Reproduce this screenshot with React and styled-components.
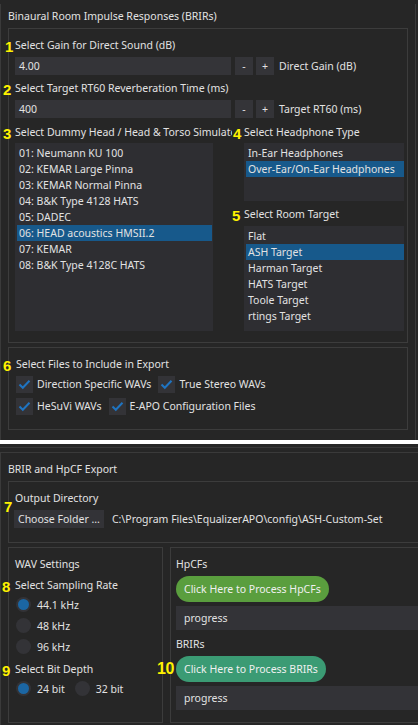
import React from 'react';
import styled, { createGlobalStyle } from 'styled-components';

const GlobalStyle = createGlobalStyle`
  html, body {
    margin: 0;
    padding: 0;
    background: #ffffff;
  }
  body {
    font-family: "Noto Sans", "Open Sans", sans-serif;
    font-size: 10.5px;
    color: #e2e2e2;
  }
`;

const Page = styled.div`
  width: 418px;
  height: 725px;
  overflow: hidden;
  display: flex;
  flex-direction: column;
  gap: 4px;
  background: #ffffff;
`;

const Shot = styled.section`
  background: #262626;
  height: ${(p) => p.$h}px;
  overflow: hidden;
  flex: ${(p) => (p.$h ? 'none' : '1')};
`;

const OuterFrame = styled.div`
  width: ${(p) => p.$w}px;
  border: 1px solid #3a3a3a;
  border-top: ${(p) => (p.$top ? '1px solid #3a3a3a' : 'none')};
  box-sizing: border-box;
  height: ${(p) => p.$h}px;
`;

const Strip = styled.div`
  margin-top: 3px;
  height: 4px;
  border-top: 1px solid #383838;
`;

const GroupTitle = styled.div`
  margin-top: 4px;
  height: 24px;
  padding-left: 7px;
  display: flex;
  align-items: center;
  white-space: nowrap;
`;

const Frame = styled.div`
  border: 1px solid #3c3c3c;
  margin: ${(p) => p.$m || '0 7px'};
  padding: ${(p) => p.$p || '7px 3px 11px 6px'};
  width: ${(p) => (p.$w ? `${p.$w}px` : 'auto')};
  box-sizing: border-box;
  flex: ${(p) => (p.$grow ? '1' : 'none')};
  position: relative;
`;

const Label = styled.div`
  position: relative;
  height: 18px;
  margin-top: ${(p) => p.$mt || 0}px;
  display: flex;
  align-items: center;
  white-space: nowrap;
`;

const ClippedText = styled.span`
  overflow: hidden;
  width: ${(p) => p.$w}px;
`;

const Marker = styled.span`
  position: absolute;
  left: ${(p) => p.$x}px;
  top: ${(p) => p.$y}px;
  color: #fff200;
  font-family: "Liberation Sans", Arial, sans-serif;
  font-weight: bold;
  font-size: ${(p) => p.$size || 15}px;
  line-height: 1;
  letter-spacing: -0.5px;
`;

const SpinRow = styled.div`
  display: flex;
  align-items: center;
  height: 18px;
  margin-top: 3px;
`;

const SpinInput = styled.div`
  width: 216px;
  height: 18px;
  background: #343438;
  padding-left: 4px;
  box-sizing: border-box;
  display: flex;
  align-items: center;
`;

const StepButton = styled.div`
  width: 18px;
  height: 18px;
  margin-left: ${(p) => p.$ml}px;
  background: #343438;
  display: flex;
  align-items: center;
  justify-content: center;
`;

const SpinCaption = styled.span`
  margin-left: 5px;
`;

const Columns = styled.div`
  display: grid;
  grid-template-columns: 217px 1fr;
  margin-top: 5px;
`;

const Column = styled.div`
  padding-left: ${(p) => p.$pl || 0}px;
  position: relative;
`;

const ListBox = styled.div`
  width: ${(p) => (p.$w ? `${p.$w}px` : 'auto')};
  height: ${(p) => p.$h}px;
  margin-top: ${(p) => p.$mt || 2}px;
  background: #2e2e32;
  padding: 2px ${(p) => p.$pr}px 2px 2px;
  box-sizing: border-box;
`;

const ListItem = styled.div`
  height: 16px;
  padding-left: 2px;
  display: flex;
  align-items: center;
  white-space: nowrap;
  background: ${(p) => (p.$selected ? '#17598b' : 'transparent')};
`;

const CheckRow = styled.div`
  display: flex;
  align-items: center;
  height: 22px;
  gap: 7px;
`;

const CheckItem = styled.div`
  display: flex;
  align-items: center;
  gap: 4px;
  white-space: nowrap;
`;

const CheckBox = styled.span`
  width: 17px;
  height: 17px;
  background: #333337;
  display: flex;
  align-items: center;
  justify-content: center;
`;

const PanelRow = styled.div`
  display: flex;
  gap: 7px;
  margin: 4px 0 0 7px;
`;

const FolderRow = styled.div`
  display: flex;
  align-items: center;
  height: 18px;
  margin-top: 3px;
  gap: 8px;
  white-space: nowrap;
`;

const FolderButton = styled.div`
  height: 18px;
  margin-left: -1px;
  padding: 0 4px;
  background: #333337;
  display: flex;
  align-items: center;
`;

const RadioRow = styled.div`
  display: flex;
  align-items: center;
  height: 21px;
  gap: 9px;
`;

const RadioItem = styled.div`
  display: flex;
  align-items: center;
  gap: 6px;
  white-space: nowrap;
`;

const RadioDot = styled.span`
  width: 15px;
  height: 15px;
  border-radius: 50%;
  background: #333337;
  margin-left: 1px;
  display: flex;
  align-items: center;
  justify-content: center;
  &::after {
    content: '';
    width: 11px;
    height: 11px;
    border-radius: 50%;
    background: ${(p) => (p.$on ? '#1b66a3' : 'transparent')};
  }
`;

const ProcessButton = styled.div`
  position: relative;
  align-self: flex-start;
  height: 26px;
  margin-top: 3px;
  padding: 0 8px;
  border-radius: 13px;
  background: ${(p) => p.$color};
  display: flex;
  align-items: center;
  white-space: nowrap;
  color: #f0f0f0;
`;

const Progress = styled.div`
  height: 24px;
  margin-top: 4px;
  background: #333337;
  padding-left: 8px;
  display: flex;
  align-items: center;
`;

const Stack = styled.div`
  display: flex;
  flex-direction: column;
`;

const Check = () => (
  <CheckBox>
    <svg width="13" height="11" viewBox="0 0 13 11">
      <path d="M1.5 5.5 L4.8 8.8 L11.5 1.8" fill="none" stroke="#1f74c1" strokeWidth="2" />
    </svg>
  </CheckBox>
);

const dummyHeads = [
  '01: Neumann KU 100',
  '02: KEMAR Large Pinna',
  '03: KEMAR Normal Pinna',
  '04: B&K Type 4128 HATS',
  '05: DADEC',
  '06: HEAD acoustics HMSII.2',
  '07: KEMAR',
  '08: B&K Type 4128C HATS',
];

const headphones = ['In-Ear Headphones', 'Over-Ear/On-Ear Headphones'];

const roomTargets = ['Flat', 'ASH Target', 'Harman Target', 'HATS Target', 'Toole Target', 'rtings Target'];

const App = () => {
  return (
    <>
      <GlobalStyle />
      <Page>
        <Shot $h={440}>
          <OuterFrame $w={416} $h={437}>
            <GroupTitle>Binaural Room Impulse Responses (BRIRs)</GroupTitle>
            <Frame>
              <Label>
                <Marker $x={-10} $y={3}>1</Marker>
                Select Gain for Direct Sound (dB)
              </Label>
              <SpinRow>
                <SpinInput>4.00</SpinInput>
                <StepButton $ml={4}>-</StepButton>
                <StepButton $ml={3}>+</StepButton>
                <SpinCaption>Direct Gain (dB)</SpinCaption>
              </SpinRow>
              <Label $mt={4}>
                <Marker $x={-12} $y={3}>2</Marker>
                Select Target RT60 Reverberation Time (ms)
              </Label>
              <SpinRow>
                <SpinInput>400</SpinInput>
                <StepButton $ml={4}>-</StepButton>
                <StepButton $ml={3}>+</StepButton>
                <SpinCaption>Target RT60 (ms)</SpinCaption>
              </SpinRow>
              <Columns>
                <Column>
                  <Label>
                    <Marker $x={-12} $y={3}>3</Marker>
                    <ClippedText $w={220}>Select Dummy Head / Head &amp; Torso Simulator</ClippedText>
                  </Label>
                  <ListBox $w={198} $h={188} $pr={1}>
                    {dummyHeads.map((d, i) => (
                      <ListItem key={d} $selected={i === 5}>{d}</ListItem>
                    ))}
                  </ListBox>
                </Column>
                <Column $pl={12}>
                  <Label>
                    <Marker $x={-11} $y={3}>4</Marker>
                    Select Headphone Type
                  </Label>
                  <ListBox $h={58} $pr={0}>
                    {headphones.map((h, i) => (
                      <ListItem key={h} $selected={i === 1}>{h}</ListItem>
                    ))}
                  </ListBox>
                  <Label $mt={4}>
                    <Marker $x={-12} $y={3}>5</Marker>
                    Select Room Target
                  </Label>
                  <ListBox $h={105} $pr={0} $mt={3}>
                    {roomTargets.map((r, i) => (
                      <ListItem key={r} $selected={i === 1}>{r}</ListItem>
                    ))}
                  </ListBox>
                </Column>
              </Columns>
            </Frame>
            <Frame $m="4px 7px 0" $p="7px 6px 12px 7px">
              <Label>
                <Marker $x={-13} $y={3}>6</Marker>
                Select Files to Include in Export
              </Label>
              <CheckRow>
                <CheckItem><Check />Direction Specific WAVs</CheckItem>
                <CheckItem><Check />True Stereo WAVs</CheckItem>
              </CheckRow>
              <CheckRow>
                <CheckItem><Check />HeSuVi WAVs</CheckItem>
                <CheckItem><Check />E-APO Configuration Files</CheckItem>
              </CheckRow>
            </Frame>
          </OuterFrame>
        </Shot>
        <Shot>
          <Strip />
          <OuterFrame $w={480} $h={300} $top>
            <GroupTitle>BRIR and HpCF Export</GroupTitle>
            <Frame $p="7px 6px 14px 6px">
              <Marker $x={-5} $y={17}>7</Marker>
              <Label>Output Directory</Label>
              <FolderRow>
                <FolderButton>Choose Folder ...</FolderButton>
                C:\Program Files\EqualizerAPO\config\ASH-Custom-Set
              </FolderRow>
            </Frame>
            <PanelRow>
              <Frame $m="0" $w={155} $p="7px 6px 12px 6px">
                <Label>WAV Settings</Label>
                <Label $mt={3}>
                  <Marker $x={-13} $y={3}>8</Marker>
                  Select Sampling Rate
                </Label>
                <RadioRow><RadioItem><RadioDot $on />44.1 kHz</RadioItem></RadioRow>
                <RadioRow><RadioItem><RadioDot />48 kHz</RadioItem></RadioRow>
                <RadioRow><RadioItem><RadioDot />96 kHz</RadioItem></RadioRow>
                <Label $mt={3}>
                  <Marker $x={-13} $y={3}>9</Marker>
                  Select Bit Depth
                </Label>
                <RadioRow>
                  <RadioItem><RadioDot $on />24 bit</RadioItem>
                  <RadioItem><RadioDot />32 bit</RadioItem>
                </RadioRow>
              </Frame>
              <Frame $m="0" $grow $p="7px 0 12px 5px">
                <Stack>
                  <Label>HpCFs</Label>
                  <ProcessButton $color="#5a9e3e">Click Here to Process HpCFs</ProcessButton>
                  <Progress>progress</Progress>
                  <Label $mt={5}>BRIRs</Label>
                  <ProcessButton $color="#3b9b74">
                    <Marker $x={-19} $y={5} $size={16}>10</Marker>
                    Click Here to Process BRIRs
                  </ProcessButton>
                  <Progress>progress</Progress>
                </Stack>
              </Frame>
            </PanelRow>
          </OuterFrame>
        </Shot>
      </Page>
    </>
  );
};

export default App;
